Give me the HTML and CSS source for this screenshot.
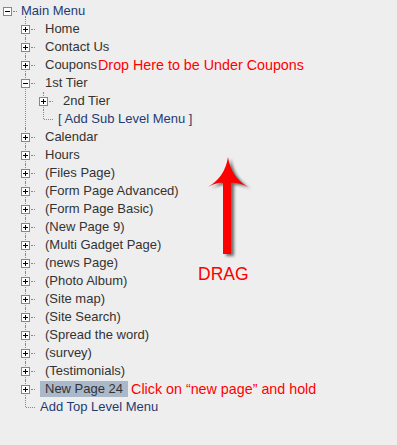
FILE: index.html
```html
<!DOCTYPE html>
<html lang="en">
<head>
    <meta charset="UTF-8">
    <meta name="viewport" content="width=device-width, initial-scale=1.0">
    <title>Menu Tree</title>
    <link rel="stylesheet" href="styles.css">
</head>
<body>
    <div class="tree">
        <div class="row">
            <span class="box"></span><span class="dash root"></span><span class="label nav root">Main Menu</span>
        </div>
        <ul class="branch top">
            <li><div class="row"><span class="box plus"></span><span class="dash"></span><span class="label">Home</span></div></li>
            <li><div class="row"><span class="box plus"></span><span class="dash"></span><span class="label">Contact Us</span></div></li>
            <li><div class="row"><span class="box plus"></span><span class="dash"></span><span class="label tight">Coupons</span><span class="note drop">Drop Here to be Under Coupons</span></div></li>
            <li>
                <div class="row"><span class="box"></span><span class="dash"></span><span class="label">1st Tier</span></div>
                <ul class="branch">
                    <li><div class="row"><span class="box plus"></span><span class="dash"></span><span class="label">2nd Tier</span></div></li>
                    <li><div class="row"><span class="dash long"></span><span class="label nav bare">[ Add Sub Level Menu ]</span></div></li>
                </ul>
            </li>
            <li><div class="row"><span class="box plus"></span><span class="dash"></span><span class="label">Calendar</span></div></li>
            <li><div class="row"><span class="box plus"></span><span class="dash"></span><span class="label">Hours</span></div></li>
            <li><div class="row"><span class="box plus"></span><span class="dash"></span><span class="label">(Files Page)</span></div></li>
            <li><div class="row"><span class="box plus"></span><span class="dash"></span><span class="label">(Form Page Advanced)</span></div></li>
            <li><div class="row"><span class="box plus"></span><span class="dash"></span><span class="label">(Form Page Basic)</span></div></li>
            <li><div class="row"><span class="box plus"></span><span class="dash"></span><span class="label">(New Page 9)</span></div></li>
            <li><div class="row"><span class="box plus"></span><span class="dash"></span><span class="label">(Multi Gadget Page)</span></div></li>
            <li><div class="row"><span class="box plus"></span><span class="dash"></span><span class="label">(news Page)</span></div></li>
            <li><div class="row"><span class="box plus"></span><span class="dash"></span><span class="label">(Photo Album)</span></div></li>
            <li><div class="row"><span class="box plus"></span><span class="dash"></span><span class="label">(Site map)</span></div></li>
            <li><div class="row"><span class="box plus"></span><span class="dash"></span><span class="label">(Site Search)</span></div></li>
            <li><div class="row"><span class="box plus"></span><span class="dash"></span><span class="label">(Spread the word)</span></div></li>
            <li><div class="row"><span class="box plus"></span><span class="dash"></span><span class="label">(survey)</span></div></li>
            <li><div class="row"><span class="box plus"></span><span class="dash"></span><span class="label">(Testimonials)</span></div></li>
            <li><div class="row"><span class="box plus"></span><span class="dash"></span><span class="label picked">New Page 24</span><span class="note">Click on &ldquo;new page&rdquo; and hold</span></div></li>
            <li><div class="row"><span class="dash long"></span><span class="label nav bare">Add Top Level Menu</span></div></li>
        </ul>
    </div>

    <!-- drag hint drawn over the tree -->
    <svg class="arrow" width="60" height="110" viewBox="200 150 60 110">
        <path d="M228 157 Q231 177 248 187 Q237 182 231 183 L231 254 L223 254 L223 183 Q218 182 208 187 Q225 177 228 157 Z" fill="#ff0000"/>
    </svg>
    <div class="drag">DRAG</div>
</body>
</html>
```

FILE: styles.css
```css
* {
    margin: 0;
    padding: 0;
    box-sizing: border-box;
}

body {
    background-color: #eeeeee;
    font-family: "Liberation Sans", Arial, sans-serif;
    font-size: 13px;
    color: #333333;
    position: relative;
    min-height: 445px;
}

.tree {
    padding: 2px 0 0 3px;
}

ul {
    list-style: none;
}

.branch {
    margin-left: 18px;
}

.branch li {
    position: relative;
}

/* dotted vertical guide */
.branch li::before {
    content: "";
    position: absolute;
    left: 4px;
    top: 0;
    bottom: 0;
    border-left: 1px dotted #8a8a8a;
}

.branch.top > li:first-child::before {
    top: -4px;
}

.branch li:last-child::before {
    bottom: auto;
    height: 9px;
}

.row {
    display: flex;
    align-items: center;
    height: 18px;
    white-space: nowrap;
}

.box {
    position: relative;
    z-index: 1;
    width: 9px;
    height: 9px;
    border: 1px solid #868686;
    background-color: #ffffff;
    flex-shrink: 0;
}

.box::before {
    content: "";
    position: absolute;
    left: 1px;
    top: 3px;
    width: 5px;
    height: 1px;
    background-color: #000000;
}

.box.plus::after {
    content: "";
    position: absolute;
    left: 3px;
    top: 1px;
    width: 1px;
    height: 5px;
    background-color: #000000;
}

.dash {
    width: 4px;
    margin: 0 5px 0 1px;
    border-top: 1px dotted #8a8a8a;
}

.dash.root {
    margin-right: 0;
}

.dash.long {
    width: 9px;
    margin-left: 5px;
}

.label {
    line-height: 16px;
    padding: 0 5px;
}

.label.root {
    padding-left: 4px;
}

.label.bare {
    padding: 0;
}

.label.tight {
    padding-right: 1px;
}

.nav {
    color: #1f3b72;
}

.picked {
    background-color: #aab9ca;
}

.note {
    color: #ff0000;
    font-size: 14.3px;
    margin-left: 3px;
}

.note.drop {
    margin-left: 0;
}

.arrow {
    position: absolute;
    left: 200px;
    top: 150px;
    filter: drop-shadow(3px 2px 1.5px rgba(0, 0, 0, 0.55));
}

.drag {
    position: absolute;
    left: 198px;
    top: 264px;
    color: #ff0000;
    font-size: 17.5px;
}
```
